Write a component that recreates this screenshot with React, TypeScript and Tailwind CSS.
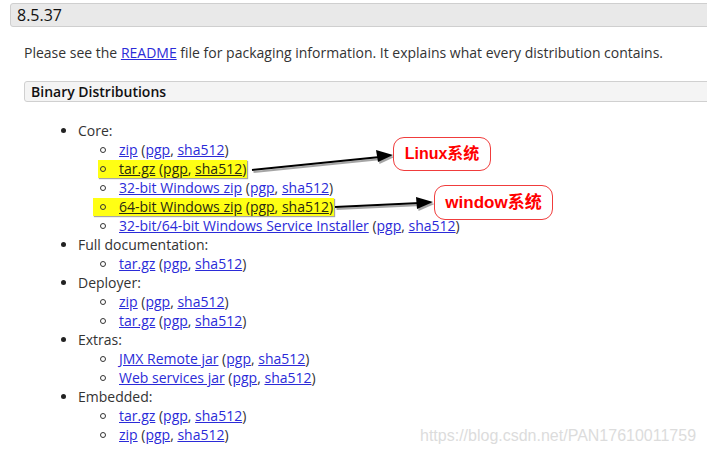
import React from "react";

const font = { fontFamily: '"Open Sans", "Noto Sans", sans-serif' };

function L({ children, dark }: { children: React.ReactNode; dark?: boolean }) {
  return (
    <a className={dark ? "text-[#2a2a10] underline" : "text-[#2b2bd8] underline"}>
      {children}
    </a>
  );
}

function Files({ name, dark }: { name: string; dark?: boolean }) {
  return (
    <>
      <L dark={dark}>{name}</L> (<L dark={dark}>pgp</L>, <L dark={dark}>sha512</L>)
    </>
  );
}

function Circle() {
  return <span className="mr-[13px] inline-block h-[6px] w-[6px] shrink-0 rounded-full border-[1.5px] border-[#333]" />;
}

function Sub({ name, mark }: { name: string; mark?: "a" | "b" }) {
  if (mark) {
    return (
      <div className="flex h-[19px] items-center pl-[100px]">
        <span
          className={
            "flex h-[18px] items-center bg-[#ffff14] pr-[1px] text-[#2a2a10] shadow-[1px_1px_1px_rgba(0,0,0,0.35)] " +
            (mark === "a" ? "-ml-[2px] pl-[2px]" : "-ml-[7px] pl-[7px]")
          }
        >
          <Circle />
          <span>
            <Files name={name} dark />
          </span>
        </span>
      </div>
    );
  }
  return (
    <div className="flex h-[19px] items-center pl-[100px]">
      <Circle />
      <span>
        <Files name={name} />
      </span>
    </div>
  );
}

function Group({ title, children }: { title: string; children: React.ReactNode }) {
  return (
    <>
      <div className="flex h-[19px] items-center pl-[61px]">
        <span className="mr-[12px] inline-block h-[5px] w-[5px] rounded-full bg-[#222]" />
        <span>{title}</span>
      </div>
      {children}
    </>
  );
}

export default function App() {
  return (
    <div className="relative h-[454px] w-[707px] overflow-hidden bg-white text-[14px] text-[#333]" style={font}>
      {/* version header */}
      <div className="mt-[3px] ml-[10px] -mr-[10px] flex h-[24px] items-center rounded-[3px] border border-[#cfcfcf] bg-[#e9e9e9] pl-[6px] text-[16px] text-[#111]">
        8.5.37
      </div>

      <p className="mt-[16px] ml-[24px] leading-[19px]">
        Please see the <L>README</L> file for packaging information. It explains what every distribution contains.
      </p>

      <div className="mt-[19px] ml-[24px] -mr-[10px] flex h-[21px] items-center rounded-[3px] border border-[#d0d0d0] bg-[#f4f4f4] pl-[6px] font-semibold text-[#111]">
        Binary Distributions
      </div>

      <div className="mt-[19px] leading-[19px]">
        <Group title="Core:">
          <Sub name="zip" />
          <Sub name="tar.gz" mark="a" />
          <Sub name="32-bit Windows zip" />
          <Sub name="64-bit Windows zip" mark="b" />
          <Sub name="32-bit/64-bit Windows Service Installer" />
        </Group>
        <Group title="Full documentation:">
          <Sub name="tar.gz" />
        </Group>
        <Group title="Deployer:">
          <Sub name="zip" />
          <Sub name="tar.gz" />
        </Group>
        <Group title="Extras:">
          <Sub name="JMX Remote jar" />
          <Sub name="Web services jar" />
        </Group>
        <Group title="Embedded:">
          <Sub name="tar.gz" />
          <Sub name="zip" />
        </Group>
      </div>

      {/* arrows */}
      <svg className="absolute inset-0" width="707" height="454">
        <g opacity="0.35" transform="translate(1.5 2)">
          <line x1="252" y1="170" x2="380" y2="157" stroke="#000" strokeWidth="2" />
          <polygon points="393,155 376,150 378,162" fill="#000" />
          <line x1="335" y1="207" x2="420" y2="203" stroke="#000" strokeWidth="2" />
          <polygon points="433,202 416,197 417,209" fill="#000" />
        </g>
        <line x1="252" y1="170" x2="380" y2="157" stroke="#000" strokeWidth="2" />
        <polygon points="393,155 376,150 378,162" fill="#000" />
        <line x1="335" y1="207" x2="420" y2="203" stroke="#000" strokeWidth="2" />
        <polygon points="433,202 416,197 417,209" fill="#000" />
      </svg>

      {/* callouts */}
      <div
        className="absolute left-[393px] top-[137px] flex h-[34px] w-[98px] items-center justify-center rounded-[11px] border-[1.5px] border-[#f03c3c] bg-white text-[16px] font-bold text-[#f00]"
        style={{ fontFamily: '"Liberation Sans", "Noto Sans CJK SC", sans-serif' }}
      >
        Linux系统
      </div>
      <div
        className="absolute left-[434px] top-[185px] flex h-[35px] w-[119px] items-center justify-center rounded-[11px] border-[1.5px] border-[#f03c3c] bg-white text-[17px] font-bold text-[#f00]"
        style={{ fontFamily: '"Liberation Sans", "Noto Sans CJK SC", sans-serif' }}
      >
        window系统
      </div>

      {/* watermark */}
      <div
        className="absolute left-[420px] top-[426px] text-[16px] leading-[20px] text-[#dcdcdc]"
        style={{ fontFamily: '"Liberation Sans", Arial, sans-serif' }}
      >
        https://blog.csdn.net/PAN17610011759
      </div>
    </div>
  );
}
